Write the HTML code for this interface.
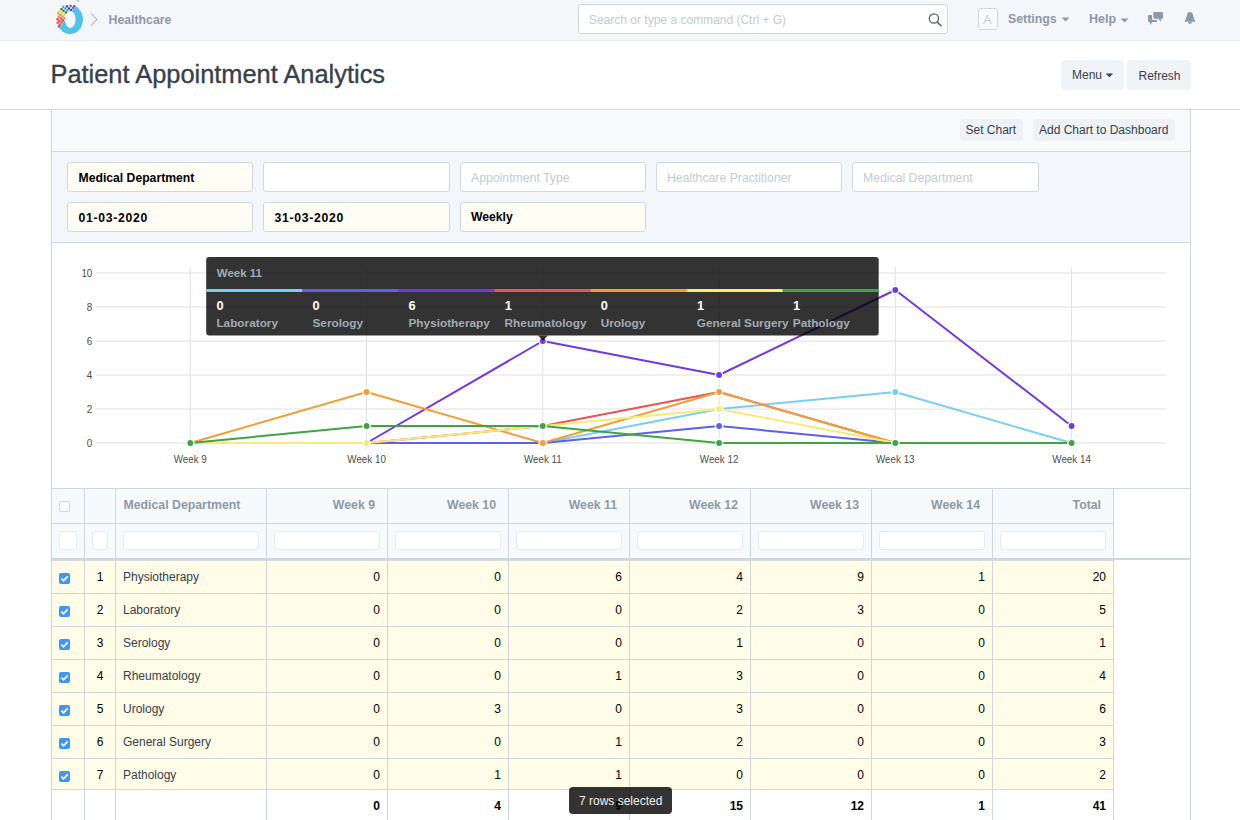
<!DOCTYPE html>
<html><head><meta charset="utf-8">
<style>
*{box-sizing:border-box;margin:0;padding:0}
html,body{width:1240px;height:820px;overflow:hidden;background:#fff;font-family:"Liberation Sans",sans-serif;color:#36414c;font-size:12px}
.a{position:absolute}
.t{position:absolute;white-space:nowrap;line-height:1}
#nav{left:0;top:0;width:1240px;height:41px;background:#f5f6fa;border-bottom:1px solid #e8ecef}
#search{left:578px;top:4px;width:370px;height:30px;border:1px solid #d1d8dd;border-radius:3px;background:#fff}
.btn{position:absolute;background:#f0f4f7;border-radius:4px}
.inp{position:absolute;width:186px;height:30px;border:1px solid #d1d8dd;border-radius:3px;background:#fff}
.inp.v{background:#fffdf4}
.ph{color:#c3cbd1}
.vb{font-weight:bold;color:#000}
.hl{position:absolute;height:1px;background:#d1d8dd}
.vl{position:absolute;width:1px;background:#d1d8dd}
</style></head><body>
<!-- NAVBAR -->
<div id="nav" class="a"></div>
<svg class="a" style="left:54px;top:2px" width="34" height="34" viewBox="54 2 34 34"><defs><clipPath id="lc"><path d="M51.3 38.6 L83.7 -5 L95 -5 L95 40 L51.3 40Z"/></clipPath></defs><path clip-path="url(#lc)" fill-rule="evenodd" fill="#4fc3ea" d="M57.1 19.5 A12.95 14.65 0 1 0 83 19.5 A12.95 14.65 0 1 0 57.1 19.5Z M65 19.4 A5.3 8.5 0 1 0 75.6 19.4 A5.3 8.5 0 1 0 65 19.4Z"/><rect x="56.4" y="18.1" width="2.2" height="2.2" fill="#e8403f"/><rect x="58.3" y="19.8" width="2.2" height="2.2" fill="#e8403f"/><rect x="60.2" y="17.5" width="2.2" height="2.2" fill="#e8403f"/><rect x="61.8" y="19.4" width="2.2" height="2.2" fill="#e8403f"/><rect x="56.6" y="21.6" width="2.2" height="2.2" fill="#e8403f"/><rect x="58.7" y="23.5" width="2.2" height="2.2" fill="#e8403f"/><rect x="60.4" y="21.4" width="2.2" height="2.2" fill="#e8403f"/><rect x="57.9" y="25.4" width="2.2" height="2.2" fill="#e8403f"/><rect x="57.3" y="12.3" width="2.2" height="2.2" fill="#f08a3c"/><rect x="59.3" y="14.0" width="2.2" height="2.2" fill="#f08a3c"/><rect x="61.4" y="15.4" width="2.2" height="2.2" fill="#f08a3c"/><rect x="63.3" y="17.3" width="2.2" height="2.2" fill="#f08a3c"/><rect x="57.7" y="15.8" width="2.2" height="2.2" fill="#f08a3c"/><rect x="58.5" y="10.2" width="2.2" height="2.2" fill="#f7d83a"/><rect x="61.0" y="11.9" width="2.2" height="2.2" fill="#f7d83a"/><rect x="63.1" y="13.6" width="2.2" height="2.2" fill="#f7d83a"/><rect x="60.4" y="8.0" width="2.2" height="2.2" fill="#2e7d46"/><rect x="62.4" y="9.6" width="2.2" height="2.2" fill="#2e7d46"/><rect x="64.7" y="11.3" width="2.2" height="2.2" fill="#2e7d46"/><rect x="62.2" y="5.7" width="2.2" height="2.2" fill="#3aa0e8"/><rect x="64.3" y="7.5" width="2.2" height="2.2" fill="#3aa0e8"/><rect x="66.4" y="9.2" width="2.2" height="2.2" fill="#3aa0e8"/><rect x="65.8" y="5.3" width="2.2" height="2.2" fill="#3b4fc4"/><rect x="67.8" y="7.3" width="2.2" height="2.2" fill="#3b4fc4"/><rect x="69.9" y="8.8" width="2.2" height="2.2" fill="#3b4fc4"/><rect x="69.5" y="4.8" width="2.2" height="2.2" fill="#a33ac4"/><rect x="71.8" y="6.7" width="2.2" height="2.2" fill="#a33ac4"/><rect x="73.2" y="5.0" width="2.2" height="2.2" fill="#a33ac4"/></svg>
<svg class="a" style="left:75px;top:0px" width="6" height="3"><path d="M0.8 0 L4.8 0 L3.2 2.2Z" fill="#c3cad1"/></svg>
<svg class="a" style="left:89px;top:12px" width="10" height="16" viewBox="0 0 10 16"><path d="M2 1.5 L8 7.5 L2 13.5" stroke="#c0c8cf" stroke-width="1.5" fill="none"/></svg>
<div class="t" style="left:108.5px;top:14px;font-size:12.3px;font-weight:bold;color:#8d99a6">Healthcare</div>
<div id="search" class="a"></div>
<div class="t" style="left:589px;top:14px;font-size:12px;color:#c3cbd1">Search or type a command (Ctrl + G)</div>
<svg class="a" style="left:926px;top:11px" width="18" height="18" viewBox="0 0 18 18"><circle cx="7.9" cy="7.5" r="4.6" stroke="#59636c" stroke-width="1.3" fill="none"/><path d="M11.2 11 L15.3 15" stroke="#59636c" stroke-width="1.7"/></svg>
<div class="a" style="left:978px;top:8px;width:20px;height:22px;border:1px solid #d1d8dd;border-radius:3px;background:#f7f9fb"></div>
<div class="t" style="left:983px;top:13px;font-size:13px;color:#c9d0d6">A</div>
<div class="t" style="left:1008px;top:13px;font-size:12.3px;font-weight:bold;color:#8d99a6">Settings</div>
<svg class="a" style="left:1060.5px;top:17px" width="10" height="6"><path d="M0.5 0.5 L8.5 0.5 L4.5 4.5Z" fill="#8d99a6"/></svg>
<div class="t" style="left:1089px;top:13px;font-size:12.5px;font-weight:bold;color:#8d99a6">Help</div>
<svg class="a" style="left:1119.5px;top:18px" width="10" height="6"><path d="M0.5 0.5 L8.5 0.5 L4.5 4.5Z" fill="#8d99a6"/></svg>
<svg class="a" style="left:1140px;top:5px" width="60" height="25" viewBox="0 0 60 25"><rect x="8" y="9.9" width="9" height="7" rx="1" fill="#8d99a6"/><path d="M9.8 16.5 L12.9 16.5 L10 19.9Z" fill="#8d99a6"/><rect x="12" y="5.8" width="12.3" height="9.3" rx="1.5" fill="#f5f6fa"/><rect x="13.3" y="7" width="9.7" height="6.8" rx="1" fill="#8d99a6"/><path d="M18.3 13.5 L21.4 13.5 L20.7 16.8Z" fill="#8d99a6"/><path d="M50 7 C48.2 7 47.3 8.3 47.1 9.8 L45.9 13.6 C45.5 14.9 45 15.8 44.4 16.8 L55.5 16.8 C54.9 15.8 54.4 14.9 54 13.6 L52.9 9.8 C52.7 8.3 51.8 7 50 7Z" fill="#8d99a6"/><path d="M48 17.1 L52 17.1 C51.8 18.2 51 18.9 50 18.9 C49 18.9 48.2 18.2 48 17.1Z" fill="#8d99a6"/></svg>


<!-- PAGE HEAD -->
<div class="t" style="left:50.5px;top:62px;font-size:25.4px;color:#36414c;-webkit-text-stroke:0.35px #36414c">Patient Appointment Analytics</div>
<div class="btn" style="left:1061px;top:60px;width:63px;height:30px"></div>
<div class="t" style="left:1072px;top:69px;font-size:12px">Menu</div>
<svg class="a" style="left:1105px;top:73px" width="10" height="6"><path d="M0.6 0.5 L8.2 0.5 L4.4 4.3Z" fill="#36414c"/></svg>
<div class="btn" style="left:1127px;top:60px;width:64px;height:30px"></div>
<div class="t" style="left:1138.5px;top:69.5px;font-size:12px">Refresh</div>
<div class="hl" style="left:0;top:109px;width:1240px"></div>

<!-- CONTAINER -->
<div class="a" style="left:51px;top:110px;width:1140px;height:41px;background:#f8fafc"></div>
<div class="vl" style="left:51px;top:109px;height:711px"></div>
<div class="vl" style="left:1190px;top:109px;height:711px"></div>
<div class="btn" style="left:960px;top:119px;width:63px;height:22px;background:#eef2f6"></div>
<div class="t" style="left:965.5px;top:124px;font-size:12px">Set Chart</div>
<div class="btn" style="left:1033px;top:119px;width:142px;height:22px;background:#eef2f6"></div>
<div class="t" style="left:1039px;top:124px;font-size:12px">Add Chart to Dashboard</div>
<div class="hl" style="left:51px;top:151px;width:1140px"></div>
<div class="a" style="left:52px;top:152px;width:1138px;height:90px;background:#f3f7fb"></div>
<div class="hl" style="left:51px;top:242px;width:1140px"></div>

<div class="inp v" style="left:67px;top:162px"></div>
<div class="t vb" style="left:78.5px;top:171.5px;font-size:12.2px">Medical Department</div>
<div class="inp" style="left:263px;top:162px;width:187px"></div>
<div class="inp" style="left:460px;top:162px"></div>
<div class="t ph" style="left:471px;top:172px;font-size:12.25px">Appointment Type</div>
<div class="inp" style="left:656px;top:162px"></div>
<div class="t ph" style="left:667px;top:172px;font-size:12.25px">Healthcare Practitioner</div>
<div class="inp" style="left:852px;top:162px;width:187px"></div>
<div class="t ph" style="left:863px;top:172px;font-size:12.25px">Medical Department</div>

<div class="inp v" style="left:67px;top:202px"></div>
<div class="t vb" style="left:78.5px;top:212px;font-size:12.2px;letter-spacing:0.72px">01-03-2020</div>
<div class="inp v" style="left:263px;top:202px;width:187px"></div>
<div class="t vb" style="left:274.5px;top:212px;font-size:12.2px;letter-spacing:0.72px">31-03-2020</div>
<div class="inp v" style="left:460px;top:202px"></div>
<div class="t vb" style="left:471px;top:211px;font-size:12.2px">Weekly</div>

<!-- CHART -->
<svg id="chart" class="a" style="left:0;top:243px" width="1240" height="245">
<line x1="96" y1="200.0" x2="1166" y2="200.0" stroke="#e0e0e0" stroke-width="1"/>
<text x="92.3" y="203.8" text-anchor="end" font-size="10.6" fill="#4a4f48" textLength="5.5" lengthAdjust="spacingAndGlyphs">0</text>
<line x1="96" y1="166.0" x2="1166" y2="166.0" stroke="#e0e0e0" stroke-width="1"/>
<text x="92.3" y="169.8" text-anchor="end" font-size="10.6" fill="#4a4f48" textLength="5.5" lengthAdjust="spacingAndGlyphs">2</text>
<line x1="96" y1="132.0" x2="1166" y2="132.0" stroke="#e0e0e0" stroke-width="1"/>
<text x="92.3" y="135.8" text-anchor="end" font-size="10.6" fill="#4a4f48" textLength="5.5" lengthAdjust="spacingAndGlyphs">4</text>
<line x1="96" y1="98.0" x2="1166" y2="98.0" stroke="#e0e0e0" stroke-width="1"/>
<text x="92.3" y="101.8" text-anchor="end" font-size="10.6" fill="#4a4f48" textLength="5.5" lengthAdjust="spacingAndGlyphs">6</text>
<line x1="96" y1="64.0" x2="1166" y2="64.0" stroke="#e0e0e0" stroke-width="1"/>
<text x="92.3" y="67.8" text-anchor="end" font-size="10.6" fill="#4a4f48" textLength="5.5" lengthAdjust="spacingAndGlyphs">8</text>
<line x1="96" y1="30.0" x2="1166" y2="30.0" stroke="#e0e0e0" stroke-width="1"/>
<text x="92.3" y="33.8" text-anchor="end" font-size="10.6" fill="#4a4f48" textLength="10.9" lengthAdjust="spacingAndGlyphs">10</text>
<line x1="190.3" y1="24" x2="190.3" y2="206" stroke="#e0e0e0" stroke-width="1"/>
<text x="190.3" y="219.8" text-anchor="middle" font-size="10.5" fill="#4a4f48" textLength="33.0" lengthAdjust="spacingAndGlyphs">Week 9</text>
<line x1="366.6" y1="24" x2="366.6" y2="206" stroke="#e0e0e0" stroke-width="1"/>
<text x="366.6" y="219.8" text-anchor="middle" font-size="10.5" fill="#4a4f48" textLength="38.5" lengthAdjust="spacingAndGlyphs">Week 10</text>
<line x1="542.8" y1="24" x2="542.8" y2="206" stroke="#e0e0e0" stroke-width="1"/>
<text x="542.8" y="219.8" text-anchor="middle" font-size="10.5" fill="#4a4f48" textLength="37.8" lengthAdjust="spacingAndGlyphs">Week 11</text>
<line x1="719.1" y1="24" x2="719.1" y2="206" stroke="#e0e0e0" stroke-width="1"/>
<text x="719.1" y="219.8" text-anchor="middle" font-size="10.5" fill="#4a4f48" textLength="38.5" lengthAdjust="spacingAndGlyphs">Week 12</text>
<line x1="895.3" y1="24" x2="895.3" y2="206" stroke="#e0e0e0" stroke-width="1"/>
<text x="895.3" y="219.8" text-anchor="middle" font-size="10.5" fill="#4a4f48" textLength="38.5" lengthAdjust="spacingAndGlyphs">Week 13</text>
<line x1="1071.6" y1="24" x2="1071.6" y2="206" stroke="#e0e0e0" stroke-width="1"/>
<text x="1071.6" y="219.8" text-anchor="middle" font-size="10.5" fill="#4a4f48" textLength="38.5" lengthAdjust="spacingAndGlyphs">Week 14</text>
<polyline points="190.3,200.0 366.6,200.0 542.8,200.0 719.1,166.0 895.3,149.0 1071.6,200.0" fill="none" stroke="#76d0f2" stroke-width="2" stroke-linejoin="round"/>
<polyline points="190.3,200.0 366.6,200.0 542.8,200.0 719.1,183.0 895.3,200.0 1071.6,200.0" fill="none" stroke="#5c5ff0" stroke-width="2" stroke-linejoin="round"/>
<polyline points="190.3,200.0 366.6,200.0 542.8,98.0 719.1,132.0 895.3,47.0 1071.6,183.0" fill="none" stroke="#7538e0" stroke-width="2" stroke-linejoin="round"/>
<polyline points="190.3,200.0 366.6,200.0 542.8,183.0 719.1,149.0 895.3,200.0 1071.6,200.0" fill="none" stroke="#e95550" stroke-width="2" stroke-linejoin="round"/>
<polyline points="190.3,200.0 366.6,149.0 542.8,200.0 719.1,149.0 895.3,200.0 1071.6,200.0" fill="none" stroke="#f19e38" stroke-width="2" stroke-linejoin="round"/>
<polyline points="190.3,200.0 366.6,200.0 542.8,183.0 719.1,166.0 895.3,200.0 1071.6,200.0" fill="none" stroke="#fbe977" stroke-width="2" stroke-linejoin="round"/>
<polyline points="190.3,200.0 366.6,183.0 542.8,183.0 719.1,200.0 895.3,200.0 1071.6,200.0" fill="none" stroke="#3ea444" stroke-width="2" stroke-linejoin="round"/>
<circle cx="190.3" cy="200.0" r="3.6" fill="#3ea444" stroke="#fff" stroke-width="1.4"/>
<circle cx="366.6" cy="200.0" r="3.6" fill="#fbe977" stroke="#fff" stroke-width="1.4"/>
<circle cx="542.8" cy="200.0" r="3.6" fill="#f19e38" stroke="#fff" stroke-width="1.4"/>
<circle cx="719.1" cy="166.0" r="3.6" fill="#fbe977" stroke="#fff" stroke-width="1.4"/>
<circle cx="895.3" cy="149.0" r="3.6" fill="#76d0f2" stroke="#fff" stroke-width="1.4"/>
<circle cx="1071.6" cy="200.0" r="3.6" fill="#3ea444" stroke="#fff" stroke-width="1.4"/>
<circle cx="719.1" cy="183.0" r="3.6" fill="#5c5ff0" stroke="#fff" stroke-width="1.4"/>
<circle cx="895.3" cy="200.0" r="3.6" fill="#3ea444" stroke="#fff" stroke-width="1.4"/>
<circle cx="542.8" cy="98.0" r="3.6" fill="#7538e0" stroke="#fff" stroke-width="1.4"/>
<circle cx="719.1" cy="132.0" r="3.6" fill="#7538e0" stroke="#fff" stroke-width="1.4"/>
<circle cx="895.3" cy="47.0" r="3.6" fill="#7538e0" stroke="#fff" stroke-width="1.4"/>
<circle cx="1071.6" cy="183.0" r="3.6" fill="#7538e0" stroke="#fff" stroke-width="1.4"/>
<circle cx="542.8" cy="183.0" r="3.6" fill="#3ea444" stroke="#fff" stroke-width="1.4"/>
<circle cx="719.1" cy="149.0" r="3.6" fill="#f19e38" stroke="#fff" stroke-width="1.4"/>
<circle cx="366.6" cy="149.0" r="3.6" fill="#f19e38" stroke="#fff" stroke-width="1.4"/>
<circle cx="366.6" cy="183.0" r="3.6" fill="#3ea444" stroke="#fff" stroke-width="1.4"/>
<circle cx="719.1" cy="200.0" r="3.6" fill="#3ea444" stroke="#fff" stroke-width="1.4"/>
<rect x="206.2" y="14.100000000000023" width="672.5" height="78.5" rx="3" fill="rgba(0,0,0,0.8)"/>
<path d="M538 92.60000000000002 L548 92.60000000000002 L543 97.60000000000002Z" fill="rgba(0,0,0,0.8)"/>
<text x="216.8" y="33.89999999999998" font-size="11.5" font-weight="bold" fill="#a3abb2">Week 11</text>
<rect x="206.2" y="46" width="96.4" height="3" fill="#76d0f2"/>
<text x="216.5" y="66.89999999999998" font-size="12.8" font-weight="bold" fill="#ffffff">0</text>
<text x="216.4" y="84.10000000000002" font-size="11.8" font-weight="bold" fill="#a3abb2">Laboratory</text>
<rect x="302.3" y="46" width="96.4" height="3" fill="#5c5ff0"/>
<text x="312.6" y="66.89999999999998" font-size="12.8" font-weight="bold" fill="#ffffff">0</text>
<text x="312.5" y="84.10000000000002" font-size="11.8" font-weight="bold" fill="#a3abb2">Serology</text>
<rect x="398.3" y="46" width="96.4" height="3" fill="#7538e0"/>
<text x="408.6" y="66.89999999999998" font-size="12.8" font-weight="bold" fill="#ffffff">6</text>
<text x="408.5" y="84.10000000000002" font-size="11.8" font-weight="bold" fill="#a3abb2">Physiotherapy</text>
<rect x="494.4" y="46" width="96.4" height="3" fill="#e95550"/>
<text x="504.7" y="66.89999999999998" font-size="12.8" font-weight="bold" fill="#ffffff">1</text>
<text x="504.6" y="84.10000000000002" font-size="11.8" font-weight="bold" fill="#a3abb2">Rheumatology</text>
<rect x="590.5" y="46" width="96.4" height="3" fill="#f19e38"/>
<text x="600.8" y="66.89999999999998" font-size="12.8" font-weight="bold" fill="#ffffff">0</text>
<text x="600.7" y="84.10000000000002" font-size="11.8" font-weight="bold" fill="#a3abb2">Urology</text>
<rect x="686.6" y="46" width="96.4" height="3" fill="#fbe977"/>
<text x="696.9" y="66.89999999999998" font-size="12.8" font-weight="bold" fill="#ffffff">1</text>
<text x="696.8" y="84.10000000000002" font-size="11.8" font-weight="bold" fill="#a3abb2">General Surgery</text>
<rect x="782.6" y="46" width="96.4" height="3" fill="#3ea444"/>
<text x="792.9" y="66.89999999999998" font-size="12.8" font-weight="bold" fill="#ffffff">1</text>
<text x="792.8" y="84.10000000000002" font-size="11.8" font-weight="bold" fill="#a3abb2">Pathology</text>
</svg>

<!-- TABLE -->
<div id="table">
<div class="a" style="left:52px;top:488px;width:1062px;height:70px;background:#f7fafc"></div>
<div class="a" style="left:52px;top:561px;width:1062px;height:229px;background:#fffce7"></div>
<div class="hl" style="left:51px;top:560px;width:1062px;background:#d4dade"></div>
<div class="hl" style="left:51px;top:488px;width:1140px"></div>
<div class="hl" style="left:51px;top:523px;width:1062px"></div>
<div class="a" style="left:51px;top:558px;width:1140px;height:2px;background:#d1d8dd"></div>
<div class="hl" style="left:51px;top:593px;width:1062px"></div>
<div class="hl" style="left:51px;top:626px;width:1062px"></div>
<div class="hl" style="left:51px;top:659px;width:1062px"></div>
<div class="hl" style="left:51px;top:692px;width:1062px"></div>
<div class="hl" style="left:51px;top:725px;width:1062px"></div>
<div class="hl" style="left:51px;top:758px;width:1062px"></div>
<div class="hl" style="left:51px;top:789px;width:1062px"></div>
<div class="vl" style="left:84px;top:488px;height:332px"></div>
<div class="vl" style="left:115px;top:488px;height:332px"></div>
<div class="vl" style="left:266px;top:488px;height:332px"></div>
<div class="vl" style="left:387px;top:488px;height:332px"></div>
<div class="vl" style="left:508px;top:488px;height:332px"></div>
<div class="vl" style="left:629px;top:488px;height:332px"></div>
<div class="vl" style="left:750px;top:488px;height:332px"></div>
<div class="vl" style="left:871px;top:488px;height:332px"></div>
<div class="vl" style="left:992px;top:488px;height:332px"></div>
<div class="vl" style="left:1113px;top:488px;height:332px"></div>
<div class="a" style="left:59px;top:501px;width:11px;height:11px;border:1px solid #d1d8dd;border-radius:2px;background:#f9fbfc"></div>
<div class="t" style="left:123.5px;top:499px;font-size:12.3px;font-weight:bold;color:#8d99a6">Medical Department</div>
<div class="t" style="right:865px;top:499px;font-size:12.3px;font-weight:bold;color:#8d99a6">Week 9</div>
<div class="t" style="right:744px;top:499px;font-size:12.3px;font-weight:bold;color:#8d99a6">Week 10</div>
<div class="t" style="right:623px;top:499px;font-size:12.3px;font-weight:bold;color:#8d99a6">Week 11</div>
<div class="t" style="right:502px;top:499px;font-size:12.3px;font-weight:bold;color:#8d99a6">Week 12</div>
<div class="t" style="right:381px;top:499px;font-size:12.3px;font-weight:bold;color:#8d99a6">Week 13</div>
<div class="t" style="right:260px;top:499px;font-size:12.3px;font-weight:bold;color:#8d99a6">Week 14</div>
<div class="t" style="right:139px;top:499px;font-size:12.3px;font-weight:bold;color:#8d99a6">Total</div>
<div class="a" style="left:59px;top:531px;width:18px;height:19px;border:1px solid #e6eaee;border-radius:3px;background:#fff"></div>
<div class="a" style="left:92px;top:531px;width:16px;height:19px;border:1px solid #e6eaee;border-radius:3px;background:#fff"></div>
<div class="a" style="left:123px;top:531px;width:136px;height:19px;border:1px solid #e6eaee;border-radius:3px;background:#fff"></div>
<div class="a" style="left:274px;top:531px;width:106px;height:19px;border:1px solid #e6eaee;border-radius:3px;background:#fff"></div>
<div class="a" style="left:395px;top:531px;width:106px;height:19px;border:1px solid #e6eaee;border-radius:3px;background:#fff"></div>
<div class="a" style="left:516px;top:531px;width:106px;height:19px;border:1px solid #e6eaee;border-radius:3px;background:#fff"></div>
<div class="a" style="left:637px;top:531px;width:106px;height:19px;border:1px solid #e6eaee;border-radius:3px;background:#fff"></div>
<div class="a" style="left:758px;top:531px;width:106px;height:19px;border:1px solid #e6eaee;border-radius:3px;background:#fff"></div>
<div class="a" style="left:879px;top:531px;width:106px;height:19px;border:1px solid #e6eaee;border-radius:3px;background:#fff"></div>
<div class="a" style="left:1000px;top:531px;width:106px;height:19px;border:1px solid #e6eaee;border-radius:3px;background:#fff"></div>
<svg class="a" style="left:59px;top:573px" width="11" height="11" viewBox="0 0 11 11"><rect width="11" height="11" rx="2" fill="#3d97f8"/><path d="M2.4 5.7 L4.5 7.8 L8.7 3.3" stroke="#fff" stroke-width="1.8" fill="none"/></svg>
<div class="t" style="left:84px;width:32px;text-align:center;top:571px;font-size:12px;color:#000">1</div>
<div class="t" style="left:123px;top:571px;font-size:12px">Physiotherapy</div>
<div class="t" style="right:860px;top:571px;font-size:12px;color:#000">0</div>
<div class="t" style="right:739px;top:571px;font-size:12px;color:#000">0</div>
<div class="t" style="right:618px;top:571px;font-size:12px;color:#000">6</div>
<div class="t" style="right:497px;top:571px;font-size:12px;color:#000">4</div>
<div class="t" style="right:376px;top:571px;font-size:12px;color:#000">9</div>
<div class="t" style="right:255px;top:571px;font-size:12px;color:#000">1</div>
<div class="t" style="right:134px;top:571px;font-size:12px;color:#000">20</div>
<svg class="a" style="left:59px;top:606px" width="11" height="11" viewBox="0 0 11 11"><rect width="11" height="11" rx="2" fill="#3d97f8"/><path d="M2.4 5.7 L4.5 7.8 L8.7 3.3" stroke="#fff" stroke-width="1.8" fill="none"/></svg>
<div class="t" style="left:84px;width:32px;text-align:center;top:604px;font-size:12px;color:#000">2</div>
<div class="t" style="left:123px;top:604px;font-size:12px">Laboratory</div>
<div class="t" style="right:860px;top:604px;font-size:12px;color:#000">0</div>
<div class="t" style="right:739px;top:604px;font-size:12px;color:#000">0</div>
<div class="t" style="right:618px;top:604px;font-size:12px;color:#000">0</div>
<div class="t" style="right:497px;top:604px;font-size:12px;color:#000">2</div>
<div class="t" style="right:376px;top:604px;font-size:12px;color:#000">3</div>
<div class="t" style="right:255px;top:604px;font-size:12px;color:#000">0</div>
<div class="t" style="right:134px;top:604px;font-size:12px;color:#000">5</div>
<svg class="a" style="left:59px;top:639px" width="11" height="11" viewBox="0 0 11 11"><rect width="11" height="11" rx="2" fill="#3d97f8"/><path d="M2.4 5.7 L4.5 7.8 L8.7 3.3" stroke="#fff" stroke-width="1.8" fill="none"/></svg>
<div class="t" style="left:84px;width:32px;text-align:center;top:637px;font-size:12px;color:#000">3</div>
<div class="t" style="left:123px;top:637px;font-size:12px">Serology</div>
<div class="t" style="right:860px;top:637px;font-size:12px;color:#000">0</div>
<div class="t" style="right:739px;top:637px;font-size:12px;color:#000">0</div>
<div class="t" style="right:618px;top:637px;font-size:12px;color:#000">0</div>
<div class="t" style="right:497px;top:637px;font-size:12px;color:#000">1</div>
<div class="t" style="right:376px;top:637px;font-size:12px;color:#000">0</div>
<div class="t" style="right:255px;top:637px;font-size:12px;color:#000">0</div>
<div class="t" style="right:134px;top:637px;font-size:12px;color:#000">1</div>
<svg class="a" style="left:59px;top:672px" width="11" height="11" viewBox="0 0 11 11"><rect width="11" height="11" rx="2" fill="#3d97f8"/><path d="M2.4 5.7 L4.5 7.8 L8.7 3.3" stroke="#fff" stroke-width="1.8" fill="none"/></svg>
<div class="t" style="left:84px;width:32px;text-align:center;top:670px;font-size:12px;color:#000">4</div>
<div class="t" style="left:123px;top:670px;font-size:12px">Rheumatology</div>
<div class="t" style="right:860px;top:670px;font-size:12px;color:#000">0</div>
<div class="t" style="right:739px;top:670px;font-size:12px;color:#000">0</div>
<div class="t" style="right:618px;top:670px;font-size:12px;color:#000">1</div>
<div class="t" style="right:497px;top:670px;font-size:12px;color:#000">3</div>
<div class="t" style="right:376px;top:670px;font-size:12px;color:#000">0</div>
<div class="t" style="right:255px;top:670px;font-size:12px;color:#000">0</div>
<div class="t" style="right:134px;top:670px;font-size:12px;color:#000">4</div>
<svg class="a" style="left:59px;top:705px" width="11" height="11" viewBox="0 0 11 11"><rect width="11" height="11" rx="2" fill="#3d97f8"/><path d="M2.4 5.7 L4.5 7.8 L8.7 3.3" stroke="#fff" stroke-width="1.8" fill="none"/></svg>
<div class="t" style="left:84px;width:32px;text-align:center;top:703px;font-size:12px;color:#000">5</div>
<div class="t" style="left:123px;top:703px;font-size:12px">Urology</div>
<div class="t" style="right:860px;top:703px;font-size:12px;color:#000">0</div>
<div class="t" style="right:739px;top:703px;font-size:12px;color:#000">3</div>
<div class="t" style="right:618px;top:703px;font-size:12px;color:#000">0</div>
<div class="t" style="right:497px;top:703px;font-size:12px;color:#000">3</div>
<div class="t" style="right:376px;top:703px;font-size:12px;color:#000">0</div>
<div class="t" style="right:255px;top:703px;font-size:12px;color:#000">0</div>
<div class="t" style="right:134px;top:703px;font-size:12px;color:#000">6</div>
<svg class="a" style="left:59px;top:738px" width="11" height="11" viewBox="0 0 11 11"><rect width="11" height="11" rx="2" fill="#3d97f8"/><path d="M2.4 5.7 L4.5 7.8 L8.7 3.3" stroke="#fff" stroke-width="1.8" fill="none"/></svg>
<div class="t" style="left:84px;width:32px;text-align:center;top:736px;font-size:12px;color:#000">6</div>
<div class="t" style="left:123px;top:736px;font-size:12px">General Surgery</div>
<div class="t" style="right:860px;top:736px;font-size:12px;color:#000">0</div>
<div class="t" style="right:739px;top:736px;font-size:12px;color:#000">0</div>
<div class="t" style="right:618px;top:736px;font-size:12px;color:#000">1</div>
<div class="t" style="right:497px;top:736px;font-size:12px;color:#000">2</div>
<div class="t" style="right:376px;top:736px;font-size:12px;color:#000">0</div>
<div class="t" style="right:255px;top:736px;font-size:12px;color:#000">0</div>
<div class="t" style="right:134px;top:736px;font-size:12px;color:#000">3</div>
<svg class="a" style="left:59px;top:771px" width="11" height="11" viewBox="0 0 11 11"><rect width="11" height="11" rx="2" fill="#3d97f8"/><path d="M2.4 5.7 L4.5 7.8 L8.7 3.3" stroke="#fff" stroke-width="1.8" fill="none"/></svg>
<div class="t" style="left:84px;width:32px;text-align:center;top:769px;font-size:12px;color:#000">7</div>
<div class="t" style="left:123px;top:769px;font-size:12px">Pathology</div>
<div class="t" style="right:860px;top:769px;font-size:12px;color:#000">0</div>
<div class="t" style="right:739px;top:769px;font-size:12px;color:#000">1</div>
<div class="t" style="right:618px;top:769px;font-size:12px;color:#000">1</div>
<div class="t" style="right:497px;top:769px;font-size:12px;color:#000">0</div>
<div class="t" style="right:376px;top:769px;font-size:12px;color:#000">0</div>
<div class="t" style="right:255px;top:769px;font-size:12px;color:#000">0</div>
<div class="t" style="right:134px;top:769px;font-size:12px;color:#000">2</div>
<div class="t" style="right:860px;top:800px;font-size:12px;font-weight:bold;color:#000">0</div>
<div class="t" style="right:739px;top:800px;font-size:12px;font-weight:bold;color:#000">4</div>
<div class="t" style="right:618px;top:800px;font-size:12px;font-weight:bold;color:#000">9</div>
<div class="t" style="right:497px;top:800px;font-size:12px;font-weight:bold;color:#000">15</div>
<div class="t" style="right:376px;top:800px;font-size:12px;font-weight:bold;color:#000">12</div>
<div class="t" style="right:255px;top:800px;font-size:12px;font-weight:bold;color:#000">1</div>
<div class="t" style="right:134px;top:800px;font-size:12px;font-weight:bold;color:#000">41</div>
<div class="a" style="left:569px;top:787px;width:103px;height:27px;border-radius:4px;background:rgba(0,0,0,0.8)"></div>
<div class="t" style="left:579px;top:795px;font-size:12px;color:#f0f0f0">7 rows selected</div>
</div><!--/table-->
</body></html>
